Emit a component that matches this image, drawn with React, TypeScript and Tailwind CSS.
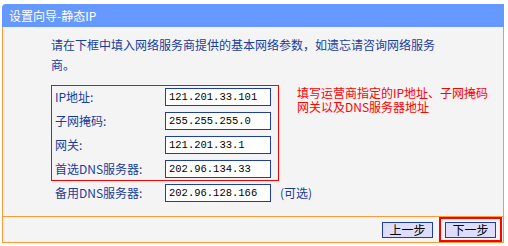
import React from "react";

const font = { fontFamily: '"Noto Sans CJK SC", "Liberation Sans", sans-serif' };
const mono = { fontFamily: '"Liberation Mono", "DejaVu Sans Mono", monospace' };

function Row({ label, value }: { label: string; value: string }) {
  return (
    <div className="flex items-center h-[18px] shrink-0">
      <div className="w-[110px] text-[12px] leading-[18px] text-[#1a3c9c] whitespace-nowrap">{label}</div>
      <div
        className="w-[106px] h-[18px] border border-[#1f3fa6] bg-white pl-[3px] text-[10.5px] leading-[16px] text-black whitespace-nowrap"
        style={mono}
      >
        {value}
      </div>
    </div>
  );
}

export default function App() {
  return (
    <div className="w-[508px] h-[246px] bg-white pt-[4px] pl-[2px]" style={font}>
      <div className="w-[502px]">
        <div className="h-[23px] bg-[#6699ff] rounded-tl-[4px] text-white text-[12px] pl-[7px] flex items-center">
          设置向导-静态IP
        </div>
        <div className="border-x border-b border-[#ff9933] bg-[#f4f4f4]">
          <div className="h-[189px] pl-[48px] pt-[8px]">
            <p className="w-[390px] text-[12px] leading-[20px] text-[#1a3c9c]">
              请在下框中填入网络服务商提供的基本网络参数，如遗忘请咨询网络服务商。
            </p>
            <div className="flex items-start mt-[10px]">
              <div className="w-[228px] shrink-0">
                <div className="w-[228px] border border-[#ff0000] pl-[3px] pt-[2px] pb-[2px] flex flex-col gap-[6px]">
                  <Row label="IP地址:" value="121.201.33.101" />
                  <Row label="子网掩码:" value="255.255.255.0" />
                  <Row label="网关:" value="121.201.33.1" />
                  <Row label="首选DNS服务器:" value="202.96.134.33" />
                </div>
                <div className="flex items-center h-[18px] mt-[3px] pl-[4px] w-[228px]">
                  <Row label="备用DNS服务器:" value="202.96.128.166" />
                  <span className="ml-[9px] text-[12px] leading-[18px] text-[#1a3c9c] whitespace-nowrap">(可选)</span>
                </div>
              </div>
              <div className="ml-[18px] mt-[1px] text-[12px] leading-[14px] text-[#ff0000] whitespace-nowrap">
                填写运营商指定的IP地址、子网掩码
                <br />
                网关以及DNS服务器地址
              </div>
            </div>
          </div>
          <div className="border-t border-[#ff9933] h-[26px] flex justify-end items-center pr-[1px] gap-[6px]">
            <button className="w-[51px] h-[16px] border border-[#1f3fa6] bg-[#dedefc] text-[12px] leading-[14px] text-black">
              上一步
            </button>
            <div className="w-[63px] h-[25px] border-2 border-[#ff0000] flex items-center justify-center">
              <button className="w-[51px] h-[16px] border border-[#1f3fa6] bg-[#dedefc] text-[12px] leading-[14px] text-black">
                下一步
              </button>
            </div>
          </div>
        </div>
      </div>
    </div>
  );
}
